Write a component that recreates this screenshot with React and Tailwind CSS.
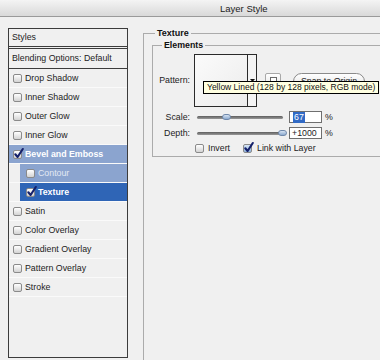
import React from "react";

const CheckBox = ({ checked, tint }) => (
  <span
    className={`relative flex h-[9px] w-[9px] shrink-0 rounded-[2px] border border-[#8a8a8a] bg-gradient-to-b ${
      tint ? "from-[#d7e6f7] to-[#8fb3dc]" : "from-white to-[#d3d3d3]"
    }`}
  >
    {checked && (
      <svg
        width="10"
        height="11"
        viewBox="0 0 10 11"
        className="absolute left-[0px] top-[-3px] overflow-visible"
      >
        <path
          d="M1.3 6.3 L3.6 9 L8.8 1"
          fill="none"
          stroke="#14206b"
          strokeWidth="2.1"
          strokeLinecap="round"
          strokeLinejoin="round"
        />
      </svg>
    )}
  </span>
);

const styleRows = [
  { label: "Drop Shadow" },
  { label: "Inner Shadow" },
  { label: "Outer Glow" },
  { label: "Inner Glow" },
  { label: "Bevel and Emboss", checked: true, kind: "parent" },
  { label: "Contour", kind: "sub" },
  { label: "Texture", checked: true, kind: "active" },
  { label: "Satin" },
  { label: "Color Overlay" },
  { label: "Gradient Overlay" },
  { label: "Pattern Overlay" },
  { label: "Stroke" },
];

const StyleRow = ({ label, checked, kind }) => {
  if (kind === "sub" || kind === "active") {
    return (
      <div className="h-[19px] border-b border-[#fafafa] pl-[11px]">
        <div
          className={`flex h-full items-center gap-[3px] pl-[6px] ${
            kind === "active"
              ? "bg-[#2f65b6] font-bold text-white"
              : "bg-[#8ba4cf] text-[#e3e9f3]"
          }`}
        >
          <CheckBox checked={checked} />
          <span>{label}</span>
        </div>
      </div>
    );
  }
  return (
    <div
      className={`flex h-[19px] items-center gap-[3px] border-b border-[#fafafa] pl-[4px] ${
        kind === "parent" ? "bg-[#8ba4cf] font-bold text-white" : "text-[#1c1c1c]"
      }`}
    >
      <CheckBox checked={checked} />
      <span>{label}</span>
    </div>
  );
};

const Slider = ({ pos }) => (
  <div className="relative ml-[7px] flex h-[12px] w-[86px] items-center">
    <div className="h-[3px] w-full rounded-full bg-gradient-to-b from-[#5e5e5e] to-[#9a9a9a]" />
    <div
      className="absolute top-[3px] h-[6px] w-[9px] rounded-full border border-[#7089ab] bg-gradient-to-b from-[#d6e3f2] to-[#8eabd0]"
      style={{ left: pos }}
    />
  </div>
);

export default function App() {
  return (
    <div className="h-[360px] w-[380px] overflow-hidden bg-[#f0f0f0] font-['Liberation_Sans',Arial,sans-serif] text-[8.8px] leading-[11px] text-[#1c1c1c]">
      <div className="h-[17px] border-b border-[#9a9a9a] bg-gradient-to-b from-[#f4f4f4] to-[#d9d9d9] pl-[220px] pt-[3px] text-[9.5px] text-[#222]">
        Layer Style
      </div>

      <div className="flex">
        <div className="ml-[8px] mt-[11px] flex h-[330px] w-[120px] shrink-0 flex-col border border-[#3c3c3c]">
          <div className="flex h-[20px] items-center border-b-[3px] border-double border-[#3c3c3c] pl-[3px]">
            Styles
          </div>
          <div className="flex h-[20px] items-center border-b border-[#3c3c3c] pl-[3px]">
            Blending Options: Default
          </div>
          {styleRows.map((r) => (
            <StyleRow key={r.label} {...r} />
          ))}
        </div>

        <fieldset className="ml-[15px] mt-[10px] h-[400px] w-[300px] shrink-0 border border-[#ababab]">
          <legend className="ml-[11px] px-[2px] text-[9px] font-bold leading-[12px] text-[#111]">
            Texture
          </legend>
          <fieldset className="ml-[8px] w-[260px] border border-[#ababab] pb-[2px]">
            <legend className="ml-[9px] px-[2px] font-bold leading-[12px] text-[#111]">
              Elements
            </legend>

            <div className="relative mt-[3px] flex items-start">
              <span className="w-[37px] self-center text-right">Pattern:</span>
              <div className="ml-[4px] flex h-[53px] w-[63px] border border-[#2a2a2a] bg-white">
                <div className="flex-1 bg-gradient-to-br from-[#fbfbfb] to-[#ececec]" />
                <div className="flex w-[9px] items-center justify-center border-l border-[#2a2a2a] bg-[#f4f4f4]">
                  <svg width="5" height="3" viewBox="0 0 5 3">
                    <path d="M0 0 H5 L2.5 3 Z" fill="#111" />
                  </svg>
                </div>
              </div>
              <div className="ml-[8px] mt-[19px] flex h-[16px] w-[16px] items-start justify-center rounded-[2px] border border-[#a8a8a8] bg-gradient-to-b from-white to-[#e2e2e2] pt-[3px]">
                <div className="h-[6px] w-[7px] border border-[#6a6a6a] bg-white" />
              </div>
              <div className="ml-[12px] mt-[19px] flex h-[17px] w-[72px] justify-center rounded-full border border-[#8a8a8a] bg-gradient-to-b from-white to-[#e0e0e0] pt-[2px]">
                Snap to Origin
              </div>

              <div className="absolute left-[50px] top-[27px] whitespace-nowrap border border-black bg-[#ffffe1] px-[3px] text-[8.5px] leading-[11px] text-[#111]">
                Yellow Lined (128 by 128 pixels, RGB mode)
              </div>
            </div>

            <div className="mt-[4px] flex h-[12px] items-center">
              <span className="w-[37px] text-right">Scale:</span>
              <Slider pos={25} />
              <div className="ml-[6px] flex h-[12px] w-[33px] items-center border border-[#6f6f6f] bg-white pl-[3px]">
                <span className="bg-[#316ac5] px-[1px] text-white">67</span>
              </div>
              <span className="ml-[3px]">%</span>
            </div>

            <div className="mt-[4px] flex h-[12px] items-center">
              <span className="w-[37px] text-right">Depth:</span>
              <Slider pos={81} />
              <div className="ml-[6px] flex h-[12px] w-[33px] items-center border border-[#6f6f6f] bg-white pl-[2px]">
                +1000
              </div>
              <span className="ml-[3px]">%</span>
            </div>

            <div className="mt-[4px] flex items-center pl-[42px]">
              <CheckBox />
              <span className="ml-[4px]">Invert</span>
              <span className="ml-[13px]">
                <CheckBox checked tint />
              </span>
              <span className="ml-[5px]">Link with Layer</span>
            </div>
          </fieldset>
        </fieldset>
      </div>
    </div>
  );
}
